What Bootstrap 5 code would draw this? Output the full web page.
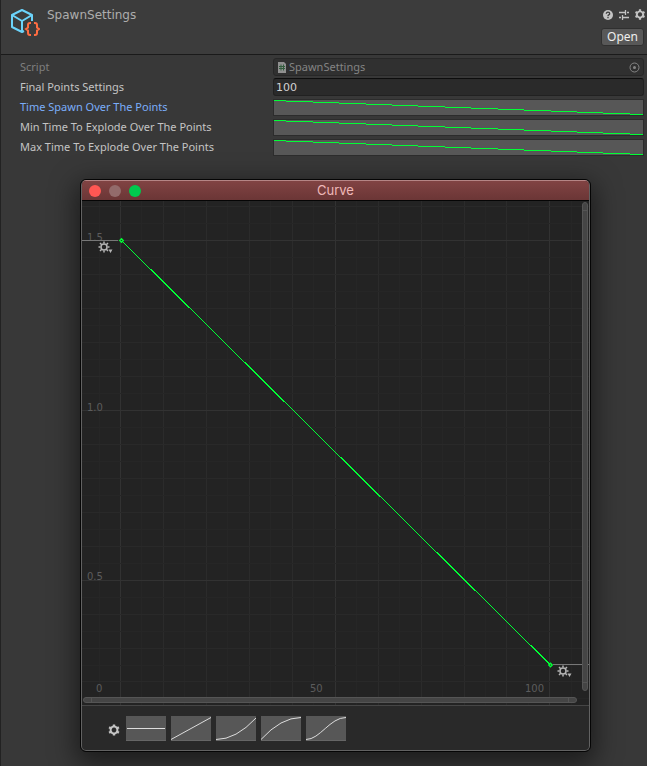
<!DOCTYPE html>
<html lang="en">
<head>
<meta charset="utf-8">
<meta name="viewport" content="width=device-width, initial-scale=1">
<title>SpawnSettings</title>
<link href="https://cdn.jsdelivr.net/npm/bootstrap@5.3.0/dist/css/bootstrap.min.css" rel="stylesheet">
<style>
body{background:#383838;color:#c4c4c4;font:11px/20px "Noto Sans",sans-serif;min-height:100vh;border-left:1px solid #222}
svg{display:block}
.asset-head{background:#3c3c3c;border-bottom:1px solid #1a1a1a;height:55px;padding:5px 1px 0 7px}
.asset-name{font:12px/20px "DejaVu Sans",sans-serif;color:#adadad;margin:0 0 0 7px}
.icon-btn{background:none;border:0;padding:0;color:#c4c4c4}
.open-btn{background:#585858;border:1px solid #303030;border-radius:3px;color:#eee;font-size:12px;line-height:16px;padding:0 5px;height:18px;margin-right:2px}
.fields{padding:2px 3px 0 19px}
.field-row{display:grid;grid-template-columns:minmax(0,253fr) minmax(0,371fr);height:20px;align-items:center}
.well{height:18px;border:1px solid #212121;border-radius:3px;background:#2a2a2a;color:#d2d2d2;font:inherit;line-height:16px;padding:0 2px;width:100%}
input.well{border-top-color:#0d0d0d;font-family:"DejaVu Sans",sans-serif}
.well-object{background:#303030;border-color:#272727;color:#848484}
.well-curve{height:17px;background:#575757;border:1px solid #2c2c2c;border-radius:0;padding:0}
.selected-label{color:#7baefa}
.dim-label{color:#7f7f7f}
.curve-window{margin:22px 56px 0 79px;border:1px solid #050505;border-radius:6px;overflow:hidden;background:#292929;box-shadow:0 8px 26px 4px rgba(0,0,0,.5)}
.curve-inner{border:1px solid #626262;border-top-color:#b58585;border-radius:5px;overflow:hidden}
.title-bar{height:20px;background:linear-gradient(#814343,#6b3636);border-bottom:1px solid #050505;color:#efb9b9;font:13px/19px Inter,"Liberation Sans",sans-serif;display:grid;grid-template-columns:1fr auto 1fr;align-items:center}
.lights{padding-left:7px}
.light{width:12px;height:12px;border-radius:50%;border:0;padding:0}
.light-close{background:#ff5753}
.light-min{background:#936b6b}
.light-zoom{background:#00ca4e}
.plot{background:#232323}
.plot svg{width:100%;height:auto;font-family:"DejaVu Sans",sans-serif}
.presets{border-top:1px solid #454545;height:45px;padding:10px 0 9px 26px;gap:5px}
.presets .icon-btn{height:28px;width:13px}
.preset{background:#575757;border:0;border-bottom:1px solid #666;padding:0;width:40px;height:25px}
.preset path{fill:none;stroke:#ddd}
</style>
</head>
<body>
<svg width="0" height="0" class="position-absolute" aria-hidden="true">
<symbol id="gear" viewBox="0 0 12 12"><path fill="none" stroke="currentColor" stroke-width="2" d="M6 2.6a3.4 3.4 0 1 0 .01 0z"/><path fill="none" stroke="currentColor" stroke-width="2.4" d="M6 .4v2M6 9.6v2M1.1 3.2l1.800 1M9.100 7.800l1.800 1M1.100 8.800l1.800-1M9.100 4.200l1.800-1"/></symbol>
<symbol id="gear8" viewBox="0 0 12 12"><circle cx="6" cy="6" r="3" fill="none" stroke="currentColor" stroke-width="1.5"/><path stroke="currentColor" stroke-width="1.5" d="M6 .5v2M6 9.500v2M.5 6h2M9.500 6h2M2 2l1.700 1.700M8.300 8.300l1.700 1.700M2 10l1.700-1.700M8.300 3.700l1.700-1.700"/></symbol>
<symbol id="falloff" viewBox="0 0 369 15" preserveAspectRatio="none"><path fill="none" stroke="#00ff35" shape-rendering="crispEdges" d="M0 .5h12M12 1.5h27M39 2.5h26M65 3.5h27M92 4.5h26M118 5.5h26M144 6.5h27M171 7.5h26M197 8.5h27M224 9.5h26M250 10.5h27M277 11.5h26M303 12.5h26M329 13.5h27M356 14.5h13"/></symbol>
</svg>
<header class="asset-head d-flex">
<svg width="32" height="34" viewBox="0 0 32 34" aria-hidden="true"><g fill="none" stroke="#6bd3fa" stroke-width="2" stroke-linejoin="round"><path d="M16 26l-2 1-10-5V10l10-5 10 5v6M4 10l10 6 10-6M14 16v11"/></g><g fill="none" stroke="#ff6d42" stroke-width="2"><path d="M23 18h-1q-2 0-2 2v2.500l-2 1.500 2 1.500v2.500q0 2 2 2h1M26 18h1q2 0 2 2v2.500l2 1.500-2 1.500v2.500q0 2-2 2h-1"/></g></svg>
<h1 class="asset-name flex-grow-1">SpawnSettings</h1>
<div class="d-flex flex-column align-items-end">
<div class="d-flex gap-1 mb-2 pt-1 lh-1">
<button class="icon-btn" aria-label="Help"><svg width="12" height="10" viewBox="0 0 12 10"><circle cx="6" cy="5" r="5" fill="currentColor"/><path d="M4.300 3.800q0-1.600 1.700-1.600t1.700 1.500q0 .8-.9 1.200T6 6.200M6 7v1.300" fill="none" stroke="#3c3c3c" stroke-width="1.300"/></svg></button>
<button class="icon-btn" aria-label="Presets"><svg width="12" height="10" viewBox="0 0 12 10"><path d="M1 2.500h6M9 2.500h2M7.500 0v5M1 7.500h2M5 7.500h6M4.500 5v5" fill="none" stroke="currentColor" stroke-width="1.300"/></svg></button>
<button class="icon-btn" aria-label="Settings"><svg width="12" height="11"><use href="#gear"/></svg></button>
</div>
<button class="open-btn">Open</button>
</div>
</header>
<main>
<form class="fields">
<div class="field-row"><label class="dim-label" for="script">Script</label><div class="well well-object d-flex align-items-center"><svg width="13" height="12" viewBox="0 0 13 12"><path fill="#909090" d="M2 1h6l2 2v9H2z"/><path stroke="#315c3c" d="M5 3.500v6M7.500 3.500v6M3 5.500h6M3 7.500h6"/></svg><span class="flex-grow-1">SpawnSettings</span><button id="script" type="button" class="icon-btn" aria-label="Select object"><svg width="12" height="11" viewBox="0 0 12 11"><circle cx="5.500" cy="5.500" r="4.500" fill="none" stroke="#858585"/><circle cx="5.500" cy="5.500" r="1.500" fill="#858585"/></svg></button></div></div>
<div class="field-row"><label for="final">Final Points Settings</label><input id="final" type="text" class="well" value="100"></div>
<div class="field-row"><label class="selected-label" for="c1">Time Spawn Over The Points</label><button id="c1" type="button" class="well well-curve"><svg width="100%" height="15"><use href="#falloff"/></svg></button></div>
<div class="field-row"><label for="c2">Min Time To Explode Over The Points</label><button id="c2" type="button" class="well well-curve"><svg width="100%" height="15"><use href="#falloff"/></svg></button></div>
<div class="field-row"><label for="c3">Max Time To Explode Over The Points</label><button id="c3" type="button" class="well well-curve"><svg width="100%" height="15"><use href="#falloff"/></svg></button></div>
</form>
<section class="curve-window"><div class="curve-inner">
<div class="title-bar"><div class="lights d-flex gap-2"><button class="light light-close" aria-label="Close"></button><button class="light light-min" aria-label="Minimize"></button><button class="light light-zoom" aria-label="Zoom"></button></div><span>Curve</span></div>
<div class="plot"><svg viewBox="82 201 507 504" font-size="10" fill="#5c5c5c">
<g id="grid" shape-rendering="crispEdges"></g>
<g><text x="87" y="241">1.5</text><text x="87" y="411">1.0</text><text x="87" y="580">0.5</text><text x="96" y="692">0</text><text x="310" y="692">50</text><text x="525" y="692">100</text></g>
<path d="M82 240.500h36M553 664.500h37" stroke="#777"/>
<path d="M121.500 240.500L550.500 665" stroke="#00ff35" shape-rendering="crispEdges"/>
<g fill="#232323" stroke="#00ff35" stroke-width="1.400"><path d="M121.500 238.800l1.700 1.700-1.700 1.700-1.700-1.700zM550.500 663.300l1.700 1.700-1.700 1.700-1.700-1.700z"/></g>
<g color="#b5b5b5"><use href="#gear8" x="98" y="241" width="12" height="12"/><use href="#gear8" x="557" y="665" width="12" height="12"/><path fill="#b5b5b5" d="M108.500 249.500h4l-2 3.500zM567.500 673.500h4l-2 3.500z"/></g>
<g fill="#454545" stroke="#555"><rect x="582.500" y="202.500" width="5" height="488" rx="2.500"/><rect x="83.500" y="697.500" width="493" height="5" rx="2.500"/><path d="M583 210.500h5M583 682.500h5M91.500 698v5M568.500 698v5"/></g>
</svg></div>
<div class="presets d-flex"><button class="icon-btn" aria-label="Preset settings"><svg width="12" height="12"><use href="#gear"/></svg></button>
<button class="preset" aria-label="Constant"><svg width="40" height="24"><path d="M1 12.500h38"/></svg></button>
<button class="preset" aria-label="Linear"><svg width="40" height="24"><path d="M0 23.500L40 1.500"/></svg></button>
<button class="preset" aria-label="Ease in"><svg width="40" height="24"><path d="M0 23.500Q20 23.500 40 2"/></svg></button>
<button class="preset" aria-label="Ease out"><svg width="40" height="24"><path d="M0 23.500Q20 1.500 40 1.500"/></svg></button>
<button class="preset" aria-label="Ease in and out"><svg width="40" height="24"><path d="M0 23.500C14 23.500 24 1.500 40 1.500"/></svg></button></div>
</div></section>
</main>
<script>
const grid=document.getElementById('grid');
function line(d,c){const p=document.createElementNS('http://www.w3.org/2000/svg','path');p.setAttribute('d',d);p.setAttribute('stroke',c);grid.append(p);}
for(let i=-1;i<=21;i++)line('M'+(Math.round(120+i*21.47)+.5)+' 201V705',i%2?'#262626':i%10?'#2b2b2b':'#323232');
for(let i=-2;i<=27;i++)line('M82 '+(Math.round(240+i*16.98)+.5)+'H590',i%2?'#262626':i%10?'#292929':'#323232');
</script>
<script src="https://cdn.jsdelivr.net/npm/bootstrap@5.3.0/dist/js/bootstrap.bundle.min.js"></script>
</body>
</html>
